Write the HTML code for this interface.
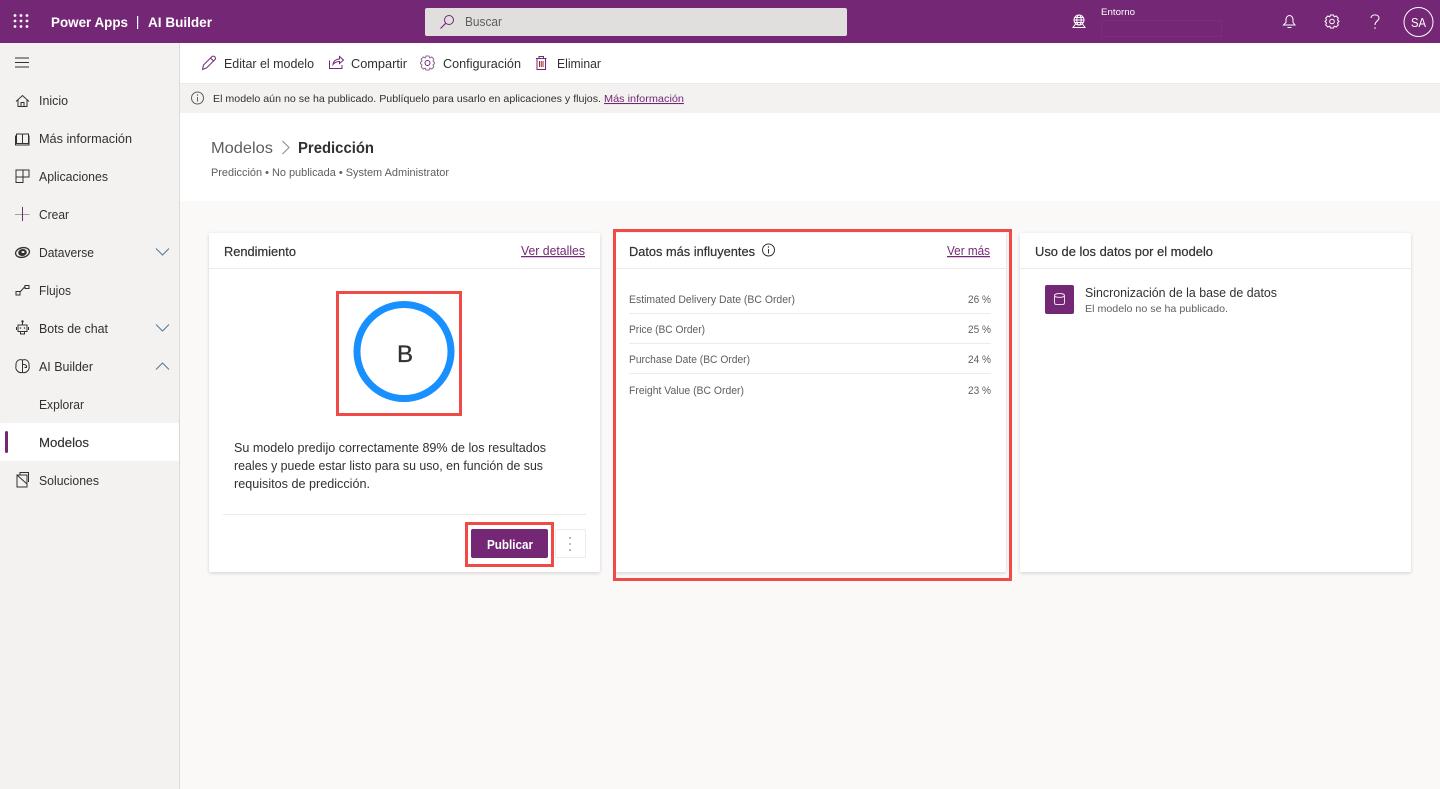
<!DOCTYPE html>
<html lang="es"><head><meta charset="utf-8"><title>Predicción</title>
<style>
html,body{margin:0;padding:0;width:1440px;height:789px;overflow:hidden;background:#faf9f8}
svg{display:block;position:absolute;left:0;top:0}
text{font-family:"Liberation Sans",Arial,sans-serif;fill:#323130}
.n{font-size:12.5px;fill:#323130}
.t{font-size:12.5px;fill:#323130;stroke:#323130;stroke-width:.2}
.s{font-size:11px;fill:#605e5c}
.l{font-size:12.5px;fill:#742774;text-decoration:underline}
.i{fill:none;stroke:#323130;stroke-width:1}
.p{fill:none;stroke:#742774;stroke-width:1}
.w{fill:none;stroke:#fff;stroke-width:1.2}
.card{fill:#fff;filter:url(#sh)}
.sep{stroke:#edebe9;stroke-width:1}
.red{fill:none;stroke:#ef4a45;stroke-width:3}
</style></head><body>
<svg width="1440" height="789" viewBox="0 0 1440 789" xmlns="http://www.w3.org/2000/svg">
<defs><filter id="sh" x="-5%" y="-5%" width="110%" height="110%"><feDropShadow dx="0" dy="1.2" stdDeviation="1.8" flood-color="#000" flood-opacity=".16"/></filter></defs>

<rect x="0" y="0" width="1440" height="789" fill="#faf9f8"/>
<rect x="180" y="43" width="1260" height="158" fill="#fff"/>
<rect x="180" y="83" width="1260" height="1" fill="#edebe9"/>
<rect x="180" y="84" width="1260" height="29" fill="#f3f2f1"/>

<!-- top bar -->
<rect x="0" y="0" width="1440" height="43" fill="#742774"/>
<g fill="#fff">
<circle cx="15" cy="15.5" r="1.4"/><circle cx="21" cy="15.5" r="1.4"/><circle cx="27" cy="15.5" r="1.4"/>
<circle cx="15" cy="21" r="1.4"/><circle cx="21" cy="21" r="1.4"/><circle cx="27" cy="21" r="1.4"/>
<circle cx="15" cy="26.5" r="1.4"/><circle cx="21" cy="26.5" r="1.4"/><circle cx="27" cy="26.5" r="1.4"/>
</g>
<text x="51" y="27" font-size="13.5" font-weight="700" style="fill:#fff" textLength="77" lengthAdjust="spacingAndGlyphs">Power Apps</text>
<rect x="137" y="16" width="1.2" height="13" fill="#fff"/>
<text x="148" y="27" font-size="13.5" font-weight="700" style="fill:#fff" textLength="64" lengthAdjust="spacingAndGlyphs">AI Builder</text>

<rect x="425" y="8" width="422" height="28" rx="2" fill="#e1dfdd"/>
<circle cx="449" cy="20" r="4.5" fill="none" stroke="#742774" stroke-width="1"/>
<path d="M445.700 23.300 L440.500 28.500" fill="none" stroke="#742774" stroke-width="1.100"/>
<text x="465" y="26" font-size="12.5" style="fill:#605e5c" textLength="37" lengthAdjust="spacingAndGlyphs">Buscar</text>

<g fill="none" stroke="#fff" stroke-width="1">
<circle cx="1079" cy="20" r="5"/><ellipse cx="1079" cy="20" rx="2.2" ry="5"/><path d="M1074 20h10M1075 17.5h8M1075 22.5h8"/>
<path d="M1075.5 24 L1073 27.5 H1085 L1082.5 24"/>
</g>
<text x="1101" y="15" font-size="9.5" style="fill:#fff" textLength="34" lengthAdjust="spacingAndGlyphs">Entorno</text>
<rect x="1101.500" y="20.500" width="120" height="16" fill="none" stroke="#7a2d7a" stroke-width="1"/>

<g fill="none" stroke="#fff" stroke-width="1">
<path d="M1283.500 25 H1295 L1293 22.500 V19.500 A3.500 4 0 0 0 1286 19.500 V22.500 Z"/><path d="M1287.500 27.500 H1291.500"/>
<circle cx="1332" cy="21.500" r="2.300"/>
<path d="M1330.500 15 H1333.500 L1334.200 16.800 L1336.200 16 L1338.300 18.100 L1337.500 20 L1339 21.500 L1337.500 23 L1338.300 24.900 L1336.200 27 L1334.200 26.200 L1333.500 28 H1330.500 L1329.800 26.200 L1327.800 27 L1325.700 24.900 L1326.500 23 L1325 21.500 L1326.500 20 L1325.700 18.100 L1327.800 16 L1329.800 16.800 Z"/>
<path d="M1371 18 C1371 13.800 1379 13.800 1379 18 C1379 21 1375 21 1375 25"/>
</g>
<circle cx="1375" cy="28" r=".8" fill="#fff"/>
<circle cx="1418.500" cy="22" r="14.500" fill="none" stroke="#fff" stroke-width="1"/>
<text x="1411" y="27" font-size="12.5" style="fill:#fff" textLength="15" lengthAdjust="spacingAndGlyphs">SA</text>

<!-- sidebar -->
<rect x="0" y="43" width="179" height="746" fill="#f3f2f1"/>
<rect x="179" y="43" width="1" height="746" fill="#dcdad8"/>
<path d="M15 58h14M15 62.500h14M15 67h14" fill="none" stroke="#323130" stroke-width="1"/>
<rect x="0" y="423" width="179" height="38" rx="2" fill="#fff"/>
<rect x="5" y="431" width="3" height="22" rx="1.500" fill="#742774"/>

<text class="n" x="39" y="105" textLength="29" lengthAdjust="spacingAndGlyphs">Inicio</text>
<text class="n" x="39" y="143" textLength="93" lengthAdjust="spacingAndGlyphs">Más información</text>
<text class="n" x="39" y="181" textLength="69" lengthAdjust="spacingAndGlyphs">Aplicaciones</text>
<text class="n" x="39" y="219" textLength="30" lengthAdjust="spacingAndGlyphs">Crear</text>
<text class="n" x="39" y="257" textLength="55" lengthAdjust="spacingAndGlyphs">Dataverse</text>
<text class="n" x="39" y="295" textLength="32" lengthAdjust="spacingAndGlyphs">Flujos</text>
<text class="n" x="39" y="333" textLength="69" lengthAdjust="spacingAndGlyphs">Bots de chat</text>
<text class="n" x="39" y="371" textLength="54" lengthAdjust="spacingAndGlyphs">AI Builder</text>
<text class="n" x="39" y="409" textLength="45" lengthAdjust="spacingAndGlyphs">Explorar</text>
<text class="n" x="39" y="447" textLength="50" lengthAdjust="spacingAndGlyphs" style="stroke:#323130;stroke-width:.15">Modelos</text>
<text class="n" x="39" y="485" textLength="60" lengthAdjust="spacingAndGlyphs">Soluciones</text>

<g class="i">
<path class="i" d="M16 101.500 L22.500 95.500 L29 101.500 M18 100 V106.500 H27 V100 M21 106.500 V102.500 H24 V106.500"/>
<path class="i" d="M16.500 134 H21.500 Q22.500 134 22.500 135 Q22.500 134 23.500 134 H28.500 V143.500 H16.500 Z M22.500 135 V143.500 M15.500 135.500 V145 H29 V135.500"/>
<path class="i" d="M16 170 H23 V177 H16 Z M23 170 H29 V177 H23 M16 177 V182.500 H23 V177"/>
<path d="M15 214.500 H29.500" stroke="#a19f9d" stroke-width="1" fill="none"/>
<path d="M22.500 207 V221" stroke="#742774" stroke-width="1" fill="none"/>
<ellipse class="i" cx="22.500" cy="252.500" rx="7" ry="4.800" transform="rotate(-12 22.500 252.500)" style="stroke-width:1.300"/>
<ellipse cx="22.500" cy="252.500" rx="4.300" ry="3.500" fill="#323130" stroke="none" transform="rotate(-12 22.500 252.500)"/>
<ellipse cx="23" cy="252" rx="1.500" ry="1" fill="#f3f2f1" stroke="none"/>
<path class="i" d="M16 291.500 H20 V295 H16 Z M20 292 L25 286.500 M25 285.500 H29 V288.500 H25 Z"/>
<path class="i" d="M18 325 H27 V331.500 H18 Z M22.500 325 V322 M16.500 327 V330 M28.500 327 V330 M20.500 331.500 V334 H24.500 V331.500"/>
<circle cx="22.500" cy="321.500" r="1.200" fill="#323130" stroke="none"/>
<circle cx="20.500" cy="328" r=".8" fill="#323130" stroke="none"/><circle cx="24.500" cy="328" r=".8" fill="#323130" stroke="none"/>
<path class="i" d="M22.500 360 C18 358.500 15.500 362 16 366 C15 369 18 373.500 22.500 372.500 C27 373.500 30 369 29 366 C29.500 362 27 358.500 22.500 360 Z M22.500 360 V372.500 M22.500 364.500 C25 364 27 365.500 26.500 367.500 H24.500"/>
<path class="i" d="M17 475 H27 V487 H17 Z M17 475 L27 484 M20 475 V472.500 H28.500 V482"/>
</g>
<path d="M156 248.500 L162.500 255 L169 248.500 M156 324.500 L162.500 331 L169 324.500 M156 369.500 L162.500 363 L169 369.500" fill="none" stroke="#55769c" stroke-width="1"/>

<!-- toolbar -->
<path class="p" d="M202.500 69.500 L203.500 65 L212 56.500 Q213.500 55.500 215 57 Q216 58.500 215 59.500 L206.500 68 Z M210.500 58 L213.500 61"/>
<text class="n" x="224" y="68" textLength="90" lengthAdjust="spacingAndGlyphs">Editar el modelo</text>
<path class="p" d="M329.500 60.500 V68.500 H342 V65 M333 64.500 C333.500 60.500 336.500 59 339.500 59 V56.500 L343.500 60 L339.500 63.500 V61.500 C336.500 61.500 334.500 62.500 333 64.500 Z"/>
<text class="n" x="351" y="68" textLength="56" lengthAdjust="spacingAndGlyphs">Compartir</text>
<g class="p"><circle class="p" cx="427.500" cy="63" r="2.500"/>
<path class="p" d="M426 56 H429 L429.700 57.800 L431.700 57 L433.800 59.100 L433 61 L434.500 62.500 V63.500 L433 65 L433.800 66.900 L431.700 69 L429.700 68.200 L429 70 H426 L425.300 68.200 L423.300 69 L421.200 66.900 L422 65 L420.500 63.500 V62.500 L422 61 L421.200 59.100 L423.300 57 L425.300 57.800 Z" style="stroke:#8f6a8f"/></g>
<text class="n" x="443" y="68" textLength="78" lengthAdjust="spacingAndGlyphs">Configuración</text>
<path class="p" d="M536 58.500 H546.500 M539 58.500 V56.500 H543.500 V58.500 M537 58.500 V69.500 H545.500 V58.500"/>
<path d="M539.500 61 V67 M541.250 61 V67 M543 61 V67" stroke="#a4262c" stroke-width="1" fill="none"/>
<text class="n" x="557" y="68" textLength="44" lengthAdjust="spacingAndGlyphs">Eliminar</text>

<!-- banner -->
<circle cx="197.500" cy="98" r="6" fill="none" stroke="#605e5c" stroke-width="1"/>
<path d="M197.500 97 V101.500" stroke="#605e5c" stroke-width="1"/><circle cx="197.500" cy="95" r=".7" fill="#605e5c"/>
<text x="213" y="102" font-size="10.500" style="fill:#323130" textLength="388" lengthAdjust="spacingAndGlyphs">El modelo aún no se ha publicado. Publíquelo para usarlo en aplicaciones y flujos.</text>
<text x="604" y="102" font-size="10.500" style="fill:#742774;text-decoration:underline" textLength="80" lengthAdjust="spacingAndGlyphs">Más información</text>

<!-- breadcrumb -->
<text x="211" y="153" font-size="16" style="fill:#605e5c" textLength="62" lengthAdjust="spacingAndGlyphs">Modelos</text>
<path d="M282.500 141 L289 147.500 L282.500 154" fill="none" stroke="#8a8886" stroke-width="1"/>
<text x="298" y="153" font-size="16" font-weight="700" style="fill:#323130" textLength="76" lengthAdjust="spacingAndGlyphs">Predicción</text>
<text class="s" x="211" y="176" font-size="10.500" textLength="238" lengthAdjust="spacingAndGlyphs">Predicción • No publicada • System Administrator</text>

<!-- cards -->
<rect class="card" x="209" y="233" width="391" height="339" rx="2"/>
<rect class="card" x="615" y="233" width="391" height="339" rx="2"/>
<rect class="card" x="1020" y="233" width="391" height="339" rx="2"/>
<path class="sep" d="M209 268.500H600M615 268.500H1006M1020 268.500H1411M223 514.500H586M629 313.500H991M629 343.500H991M629 373.500H991"/>

<!-- card 1 -->
<text class="t" x="224" y="256" textLength="72" lengthAdjust="spacingAndGlyphs">Rendimiento</text>
<text class="l" x="521" y="255" textLength="64" lengthAdjust="spacingAndGlyphs">Ver detalles</text>
<rect class="red" x="337.500" y="292.500" width="123" height="122"/>
<circle cx="404" cy="351.500" r="47" fill="none" stroke="#1890ff" stroke-width="7"/>
<text x="397" y="362" font-size="24" style="fill:#323130;stroke:#323130;stroke-width:.3">B</text>
<text class="n" x="234" y="452" textLength="312" lengthAdjust="spacingAndGlyphs">Su modelo predijo correctamente 89% de los resultados</text>
<text class="n" x="234" y="470" textLength="309" lengthAdjust="spacingAndGlyphs">reales y puede estar listo para su uso, en función de sus</text>
<text class="n" x="234" y="488" textLength="136" lengthAdjust="spacingAndGlyphs">requisitos de predicción.</text>
<rect x="471" y="529" width="77" height="29" rx="2" fill="#742774"/>
<text x="487" y="549" font-size="12.500" font-weight="700" style="fill:#fff" textLength="46" lengthAdjust="spacingAndGlyphs">Publicar</text>
<rect class="red" x="466.500" y="523.500" width="86" height="42"/>
<rect x="555.500" y="529.500" width="30" height="28" rx="1.500" fill="#fff" stroke="#edebe9"/>
<g fill="#9a7aa8"><circle cx="570" cy="538" r=".9"/><circle cx="570" cy="544" r=".9"/><circle cx="570" cy="550" r=".9"/></g>

<!-- card 2 -->
<text class="t" x="629" y="256" textLength="126" lengthAdjust="spacingAndGlyphs">Datos más influyentes</text>
<circle cx="768.500" cy="250" r="6" fill="none" stroke="#323130" stroke-width="1"/>
<path d="M768.500 249 V253.500" stroke="#323130" stroke-width="1"/><circle cx="768.500" cy="247" r=".7" fill="#323130"/>
<text class="l" x="947" y="255" textLength="43" lengthAdjust="spacingAndGlyphs">Ver más</text>
<text class="s" x="629" y="303" font-size="10.500" textLength="166" lengthAdjust="spacingAndGlyphs">Estimated Delivery Date (BC Order)</text>
<text class="s" x="629" y="333" font-size="10.500" textLength="76" lengthAdjust="spacingAndGlyphs">Price (BC Order)</text>
<text class="s" x="629" y="363" font-size="10.500" textLength="121" lengthAdjust="spacingAndGlyphs">Purchase Date (BC Order)</text>
<text class="s" x="629" y="394" font-size="10.500" textLength="115" lengthAdjust="spacingAndGlyphs">Freight Value (BC Order)</text>
<text class="s" x="968" y="303" font-size="10.500" textLength="23" lengthAdjust="spacingAndGlyphs">26 %</text>
<text class="s" x="968" y="333" font-size="10.500" textLength="23" lengthAdjust="spacingAndGlyphs">25 %</text>
<text class="s" x="968" y="363" font-size="10.500" textLength="23" lengthAdjust="spacingAndGlyphs">24 %</text>
<text class="s" x="968" y="394" font-size="10.500" textLength="23" lengthAdjust="spacingAndGlyphs">23 %</text>
<rect class="red" x="614.500" y="230.500" width="396" height="349"/>

<!-- card 3 -->
<text class="t" x="1035" y="256" textLength="178" lengthAdjust="spacingAndGlyphs">Uso de los datos por el modelo</text>
<rect x="1045" y="285" width="29" height="29" rx="2" fill="#742774"/>
<path d="M1054.500 295.500 C1054.500 292.800 1064.500 292.800 1064.500 295.500 V302.500 Q1064.500 304.500 1062.500 304.500 H1056.500 Q1054.500 304.500 1054.500 302.500 Z M1054.500 295.500 C1054.500 298 1064.500 298 1064.500 295.500" fill="none" stroke="#fff" stroke-width="1" opacity=".85"/>
<text x="1085" y="297" font-size="12.500" style="fill:#323130" textLength="192" lengthAdjust="spacingAndGlyphs">Sincronización de la base de datos</text>
<text x="1085" y="312" font-size="10.500" style="fill:#605e5c" textLength="143" lengthAdjust="spacingAndGlyphs">El modelo no se ha publicado.</text>
</svg>
</body></html>
